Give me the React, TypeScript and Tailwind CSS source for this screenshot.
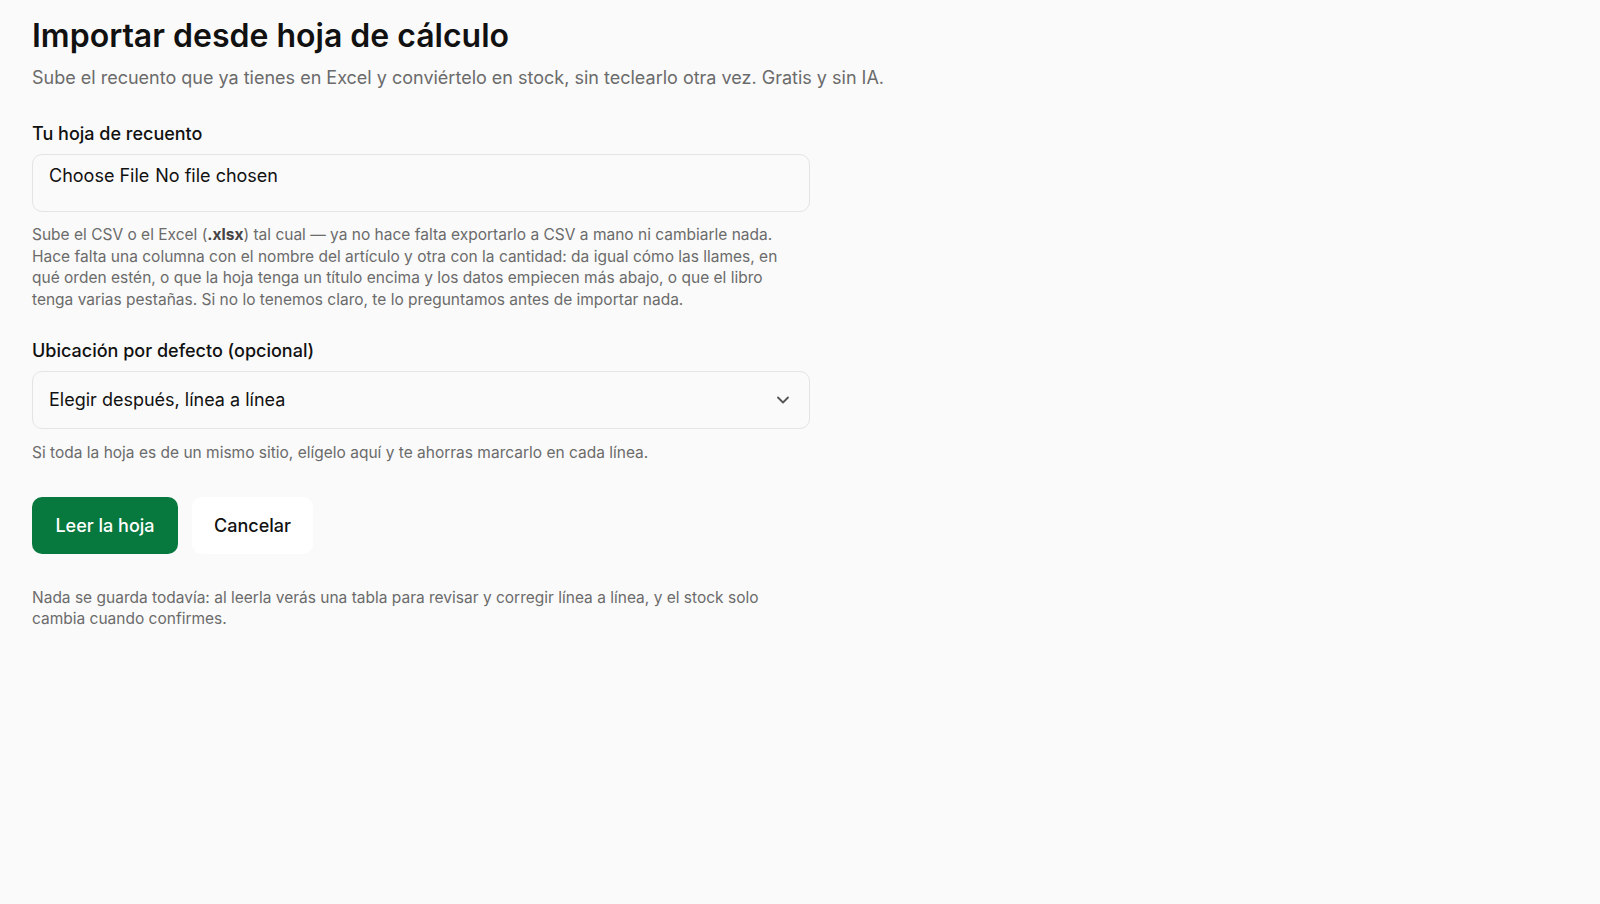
import { ChevronDown } from 'lucide-react';

export default function App() {
  return (
    <div className="min-h-screen bg-[#fafafa] text-[#111] font-['Inter','Liberation_Sans',sans-serif]">
      <div className="px-8 pt-[16px]">
        <h1 className="text-[32px] leading-[40px] font-semibold">
          Importar desde hoja de cálculo
        </h1>
        <p className="mt-[9px] text-[18px] leading-[26px] text-[#6b6b6b]">
          Sube el recuento que ya tienes en Excel y conviértelo en stock, sin teclearlo otra vez. Gratis y sin IA.
        </p>

        <div className="mt-[30px] w-[778px]">
          <label className="block text-[18px] leading-[26px] font-medium">Tu hoja de recuento</label>
          <div className="mt-[7px] h-[58px] rounded-[10px] border border-[#e4e4e4] bg-[#fafafa] px-4 pt-[8px]">
            <input
              type="file"
              className="text-[18px] leading-[26px] text-[#111] file:mr-[6px] file:border-0 file:bg-transparent file:p-0 file:text-[18px] file:font-normal file:text-[#111]"
            />
          </div>
          <p className="mt-[12px] pr-[4px] text-[15.5px] leading-[21.5px] text-[#6b6b6b]">
            Sube el CSV o el Excel (<b className="font-bold text-[#444]">.xlsx</b>) tal cual — ya no hace falta exportarlo a CSV a mano ni cambiarle nada. Hace falta una columna con el nombre del artículo y otra con la cantidad: da igual cómo las llames, en qué orden estén, o que la hoja tenga un título encima y los datos empiecen más abajo, o que el libro tenga varias pestañas. Si no lo tenemos claro, te lo preguntamos antes de importar nada.
          </p>

          <label className="mt-[28px] block text-[18px] leading-[26px] font-medium">Ubicación por defecto (opcional)</label>
          <div className="mt-[7px] flex h-[58px] items-center justify-between rounded-[10px] border border-[#e4e4e4] bg-[#fafafa] pl-4 pr-[16px]">
            <span className="text-[18px] leading-[26px]">Elegir después, línea a línea</span>
            <ChevronDown className="h-5 w-5 text-[#555]" strokeWidth={2.2} />
          </div>
          <p className="mt-[13px] text-[15.5px] leading-[21.5px] text-[#6b6b6b]">
            Si toda la hoja es de un mismo sitio, elígelo aquí y te ahorras marcarlo en cada línea.
          </p>

          <div className="mt-[33px] flex gap-[14px]">
            <button className="h-[57px] w-[146px] rounded-[10px] bg-[#07793f] text-[18px] font-medium text-white">
              Leer la hoja
            </button>
            <button className="h-[57px] w-[121px] rounded-[10px] bg-white text-[18px] font-medium text-[#111]">
              Cancelar
            </button>
          </div>

          <p className="mt-[33px] text-[15.5px] leading-[21.5px] text-[#6b6b6b]">
            Nada se guarda todavía: al leerla verás una tabla para revisar y corregir línea a línea, y el stock solo cambia cuando confirmes.
          </p>
        </div>
      </div>
    </div>
  );
}
